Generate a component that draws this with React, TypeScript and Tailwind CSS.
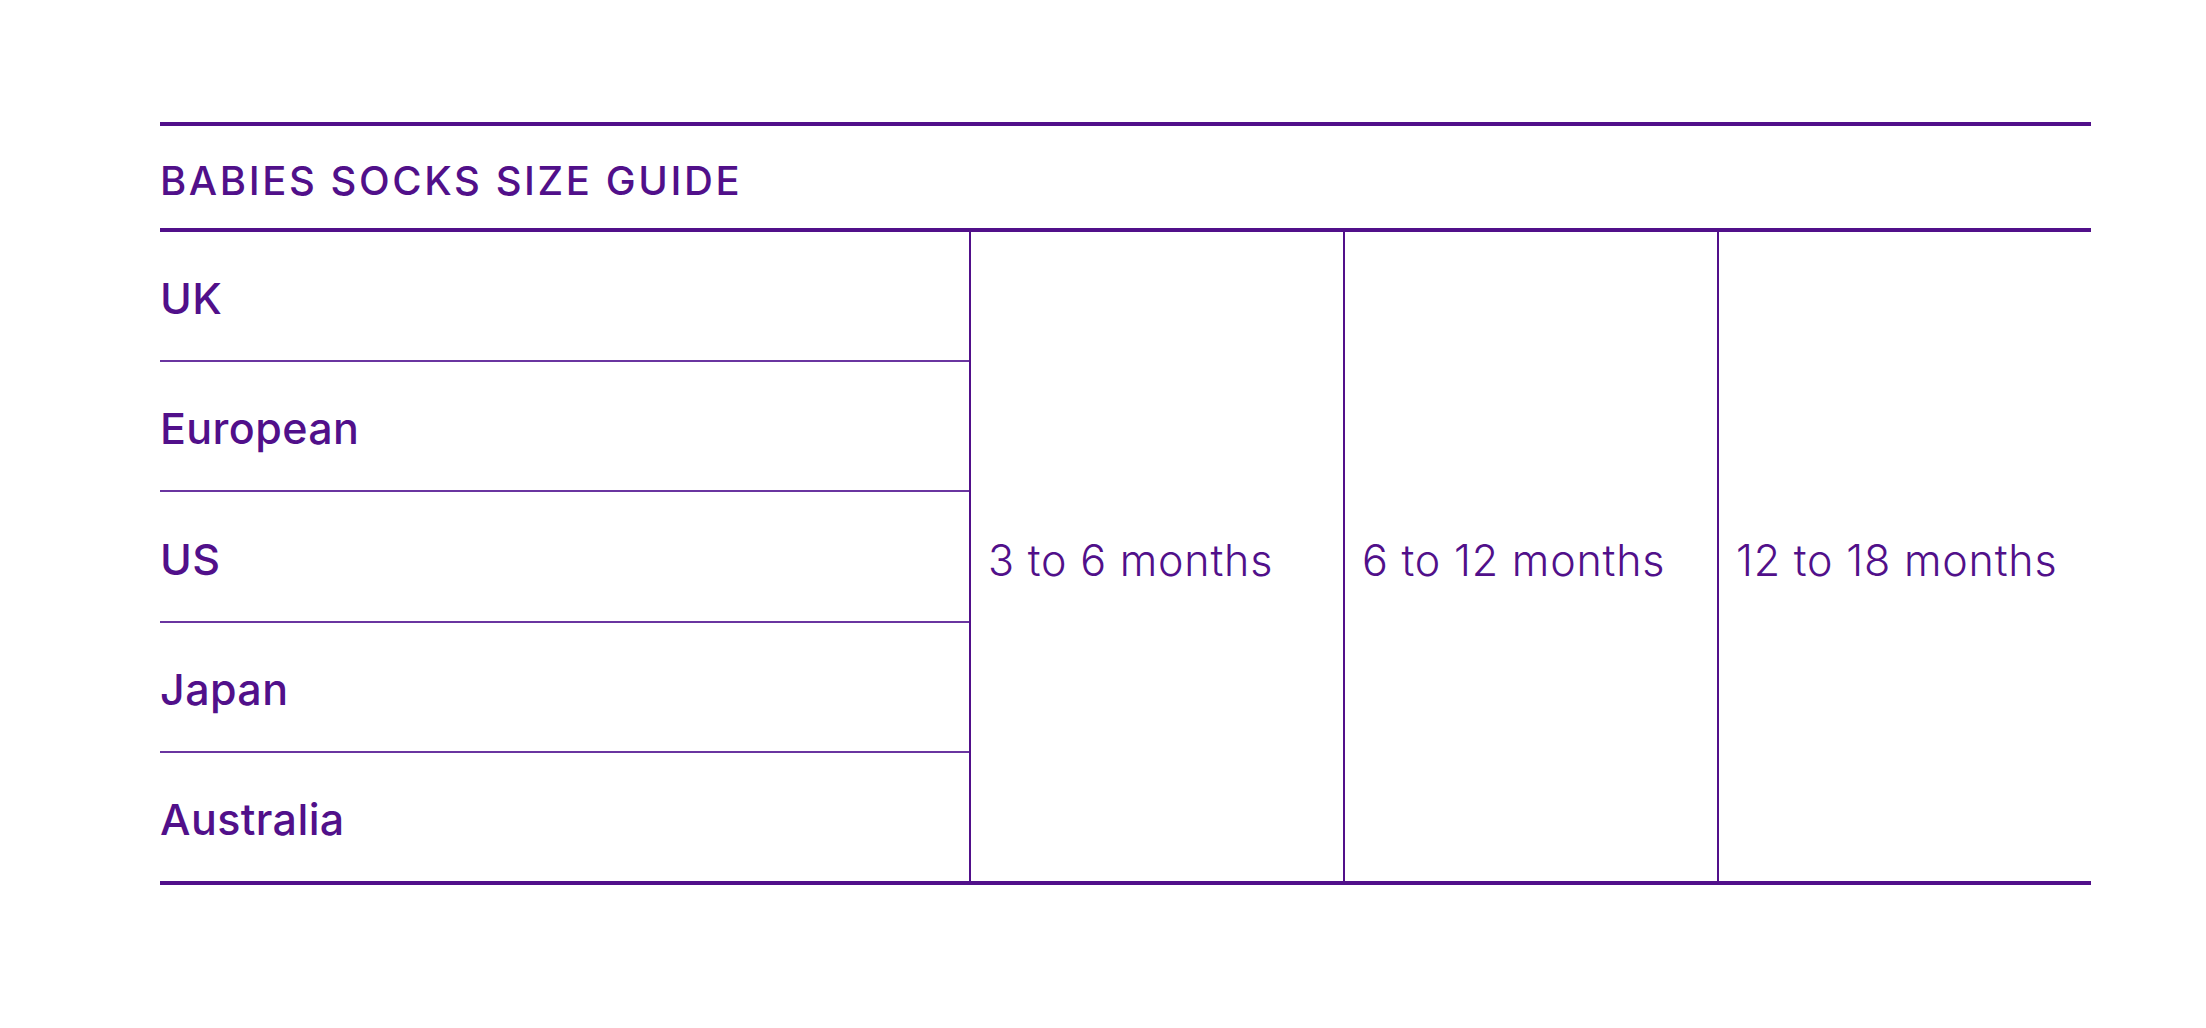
import React from 'react';

const regions = ['UK', 'European', 'US', 'Japan', 'Australia'];
const sizes = ['3 to 6 months', '6 to 12 months', '12 to 18 months'];

const SizeGuide: React.FC = () => {
  return (
    <div className="w-[1931px] text-[#51108a]" style={{ fontFamily: 'Inter, "Liberation Sans", sans-serif' }}>
      <div className="h-[4px] bg-[#51108a]" />
      <div className="flex h-[102px] items-center pt-[8px]">
        <h2 className="text-[40px] font-medium leading-none tracking-[2.6px]">BABIES SOCKS SIZE GUIDE</h2>
      </div>
      <div className="h-[4px] bg-[#51108a]" />
      <div className="grid h-[649px] grid-cols-[809px_374px_374px_374px]">
        <div className="flex flex-col">
          {regions.map((r, i) => (
            <React.Fragment key={r}>
              {i > 0 && <div className="h-[2px] bg-[#6a35a0]" />}
              <div className="flex flex-1 items-center pt-[5px]">
                <span className="text-[43px] font-medium leading-none tracking-[0.4px]">{r}</span>
              </div>
            </React.Fragment>
          ))}
        </div>
        {sizes.map((s) => (
          <div key={s} className="flex items-center border-l-2 border-[#51108a] pl-[17px] pt-[8px]">
            <span className="text-[43px] font-light leading-none tracking-[0.8px]">{s}</span>
          </div>
        ))}
      </div>
      <div className="h-[4px] bg-[#51108a]" />
    </div>
  );
};

export default function App() {
  return (
    <div className="h-[1028px] w-full bg-white pl-[160px] pt-[122px]">
      <SizeGuide />
    </div>
  );
}
